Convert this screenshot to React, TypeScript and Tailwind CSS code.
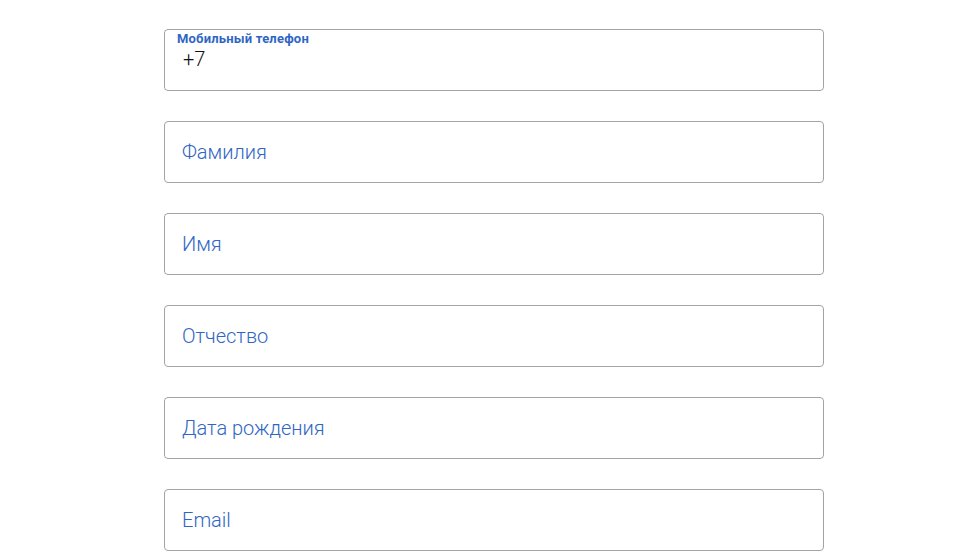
import React from "react";

const fields = ["Фамилия", "Имя", "Отчество", "Дата рождения", "Email"];

export default function App() {
  return (
    <div className="w-[980px] h-[559px] bg-white overflow-hidden" style={{ fontFamily: "Roboto, 'Noto Sans', sans-serif" }}>
      <div className="flex flex-col gap-[30px] pl-[164px] pt-[29px]">
        <div className="relative w-[660px] h-[62px] border border-[#a3a3a3] rounded-[4px]">
          <div className="absolute left-[12px] top-[0px] text-[13px] font-bold text-[#2f66c4] leading-[18px] tracking-[0.2px]">
            Мобильный телефон
          </div>
          <div className="absolute left-[18px] top-[16px] text-[20px] font-light text-[#111] leading-[26px]">+7</div>
        </div>
        {fields.map((f) => (
          <div key={f} className="w-[660px] h-[62px] border border-[#a3a3a3] rounded-[4px] flex items-center pl-[17px]">
            <span className="text-[20px] font-light text-[#2f66c4] leading-none">{f}</span>
          </div>
        ))}
      </div>
    </div>
  );
}
